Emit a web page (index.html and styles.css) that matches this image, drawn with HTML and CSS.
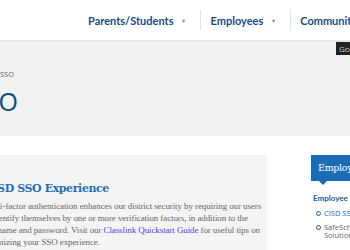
FILE: index.html
```html
<!DOCTYPE html>
<html lang="en">
<head>
    <meta charset="UTF-8">
    <meta name="viewport" content="width=device-width, initial-scale=1.0">
    <title>CISD SSO</title>
    <link rel="stylesheet" href="styles.css">
</head>
<body>
    <!-- top navigation -->
    <header class="site-header">
        <nav class="main-nav">
            <div class="nav-item">Parents/Students <span class="caret">&#9662;</span></div>
            <div class="nav-item">Employees <span class="caret">&#9662;</span></div>
            <div class="nav-item">Community <span class="caret">&#9662;</span></div>
        </nav>
        <button class="go-btn">Go</button>
    </header>

    <!-- page banner -->
    <div class="banner">
        <div class="banner-inner">
            <div class="breadcrumb">Home / Departments / CISD SSO</div>
            <h1 class="page-title">CISD SSO</h1>
        </div>
    </div>

    <!-- content -->
    <div class="content">
        <div class="card">
            <h2 class="card-title">CISD SSO Experience</h2>
            <p class="card-text">Multi-factor authentication enhances our district security by requiring our users to identify themselves by one or more verification factors, in addition to the username and password. Visit our <a href="#">Classlink Quickstart Guide</a> for useful tips on optimizing your SSO experience.</p>
        </div>

        <aside class="sidebar">
            <div class="side-head">Employees</div>
            <div class="side-group">Employee Resources</div>
            <ul class="side-list">
                <li class="active">CISD SSO</li>
                <li>SafeSchools Training Solutions</li>
            </ul>
        </aside>
    </div>
</body>
</html>
```

FILE: styles.css
```css
html {
    height: 250px;
    overflow: hidden;
}
body {
    margin: 0;
    width: 350px;
    overflow: hidden;
    background-color: white;
    font-family: Lato, "Open Sans", sans-serif;
}
/* header */
.site-header {
    height: 40px;
    background-color: white;
    border-bottom: 2px solid #e6e6e6;
}
.main-nav {
    display: flex;
    align-items: center;
    height: 40px;
    padding-left: 88px;
    white-space: nowrap;
}
.nav-item {
    display: flex;
    align-items: center;
    height: 20px;
    padding: 0 15px 0 0;
    margin-right: 9px;
    border-right: 1px solid #e3e3e3;
    color: #1c4b7c;
    font-weight: bold;
    font-size: 11px;
}
.caret {
    margin-left: 9px;
    color: #8a97a6;
    font-size: 6px;
}
.go-btn {
    position: absolute;
    top: 42px;
    left: 336px;
    width: 20px;
    height: 13px;
    padding: 0 0 0 3px;
    border: none;
    background-color: #222;
    color: #ccc;
    font-family: "Open Sans", sans-serif;
    font-size: 8px;
    text-align: left;
}
/* banner */
.banner {
    height: 94px;
    background-color: #f2f2f2;
}
.banner-inner {
    margin-left: -90px;
    padding-top: 27px;
    white-space: nowrap;
}
.breadcrumb {
    margin-left: -9px;
    color: #666;
    font-family: "Open Sans", sans-serif;
    font-size: 7.5px;
}
.page-title {
    margin: 7px 0 0;
    color: #0d4a7a;
    font-family: "Open Sans", sans-serif;
    font-weight: normal;
    font-size: 25px;
    line-height: 30px;
}
/* content */
.content {
    display: flex;
    gap: 44px;
    padding-top: 19px;
}
.card {
    flex: none;
    width: 287px;
    margin-left: -20px;
    padding: 27px 2px 10px 3px;
    background-color: #f4f4f4;
    box-sizing: border-box;
}
.card-title {
    margin: 0 0 4px 1px;
    color: #2a6db0;
    font-family: "DejaVu Serif", serif;
    font-size: 11px;
    letter-spacing: -0.4px;
    line-height: 14px;
}
.card-text {
    margin: 0;
    color: #666;
    font-family: "Liberation Serif", serif;
    font-size: 9px;
    letter-spacing: -0.1px;
    line-height: 12px;
}
.card-text a {
    color: #4b3fe0;
    text-decoration: none;
}
.sidebar {
    flex: none;
    width: 120px;
    white-space: nowrap;
}
.side-head {
    position: relative;
    height: 26px;
    padding-left: 7px;
    background-color: #1a6db5;
    color: white;
    font-family: "DejaVu Serif", serif;
    font-size: 9.5px;
    letter-spacing: -0.3px;
    line-height: 26px;
}
.side-head::after {
    content: "";
    position: absolute;
    left: 8px;
    bottom: -4px;
    border-left: 4px solid transparent;
    border-right: 4px solid transparent;
    border-top: 4px solid #1a6db5;
}
.side-group {
    margin: 12px 0 0 2px;
    color: #1a5a9e;
    font-weight: bold;
    font-size: 8px;
}
.side-list {
    list-style: none;
    margin: 6px 0 0;
    padding: 0 0 7px 13px;
    border-bottom: 1px solid #ddd;
    font-family: "Open Sans", sans-serif;
    font-size: 7.5px;
    line-height: 8px;
}
.side-list li {
    position: relative;
    width: 80px;
    margin-bottom: 6px;
    color: #666;
    white-space: normal;
}
.side-list li.active {
    color: #1a6db5;
}
.side-list li::before {
    content: "";
    position: absolute;
    left: -8px;
    top: 2px;
    width: 3px;
    height: 3px;
    border: 1px solid #555;
    border-radius: 50%;
}
.side-list li.active::before {
    border-color: #1a6db5;
}
```
